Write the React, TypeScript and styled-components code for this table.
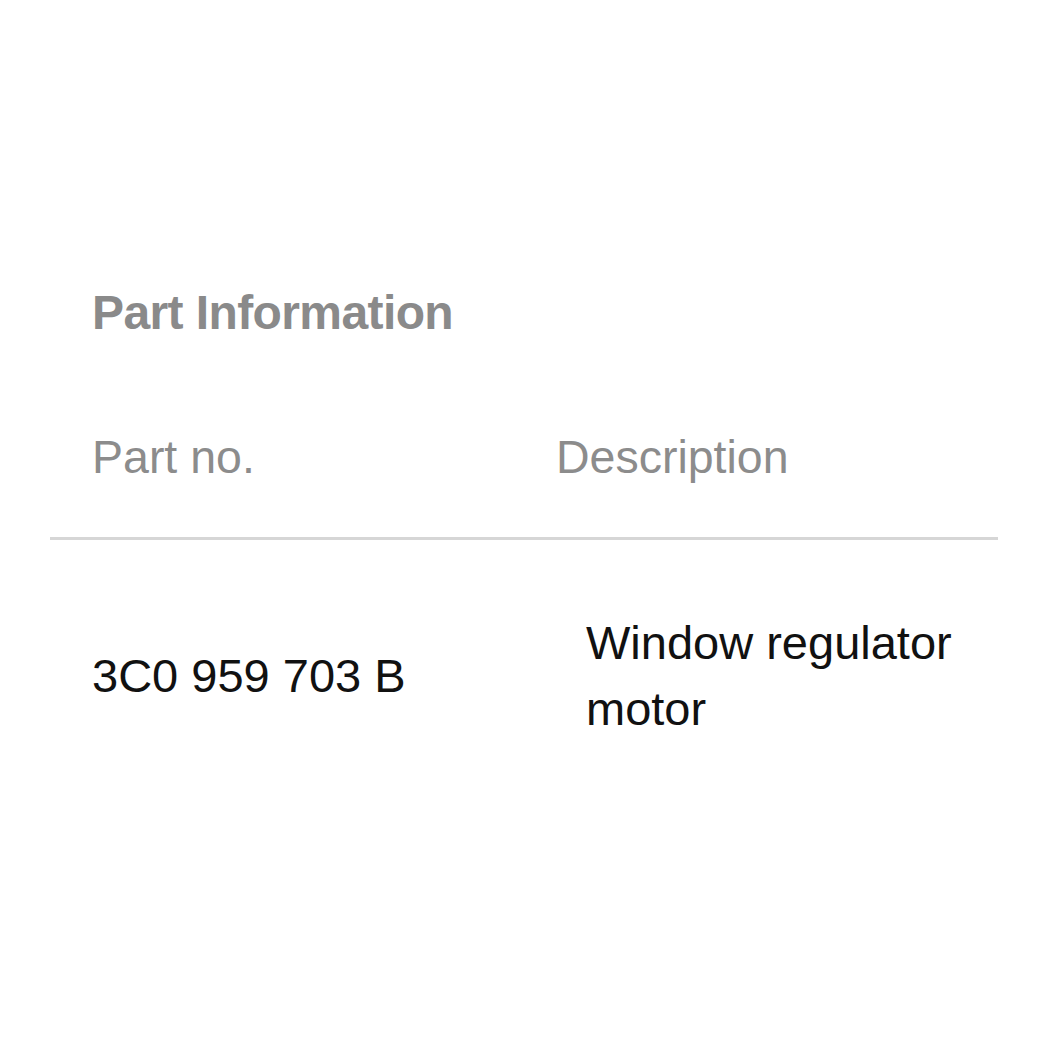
import React from 'react';
import styled, { createGlobalStyle } from 'styled-components';

const GlobalStyle = createGlobalStyle`
  html, body {
    margin: 0;
    padding: 0;
    background: #ffffff;
  }
  body {
    font-family: 'Liberation Sans', Arial, sans-serif;
  }
`;

const Page = styled.div`
  width: 1050px;
  height: 1050px;
  padding: 283px 52px 0 50px;
  box-sizing: border-box;
`;

const Title = styled.h2`
  margin: 0 0 84px 42px;
  font-size: 48px;
  line-height: 60px;
  font-weight: 700;
  letter-spacing: -0.6px;
  color: #8a8a8a;
`;

const Table = styled.div`
  display: grid;
  grid-template-columns: 464px 1fr;
`;

const HeadCell = styled.div`
  padding: 0 0 50px 42px;
  font-size: 46.5px;
  line-height: 60px;
  color: #8c8c8c;
  border-bottom: 3px solid #d6d6d6;
`;

const Cell = styled.div<{ $indent: number }>`
  display: flex;
  align-items: center;
  padding: 70px 0 0 ${({ $indent }) => $indent}px;
  font-size: 47px;
  line-height: 66px;
  color: #111111;
`;

const App = () => {
  return (
    <Page>
      <GlobalStyle />
      <Title>Part Information</Title>
      <Table>
        <HeadCell>Part no.</HeadCell>
        <HeadCell>Description</HeadCell>
        <Cell $indent={42}>3C0 959 703 B</Cell>
        <Cell $indent={72}>Window regulator motor</Cell>
      </Table>
    </Page>
  );
};

export default App;
